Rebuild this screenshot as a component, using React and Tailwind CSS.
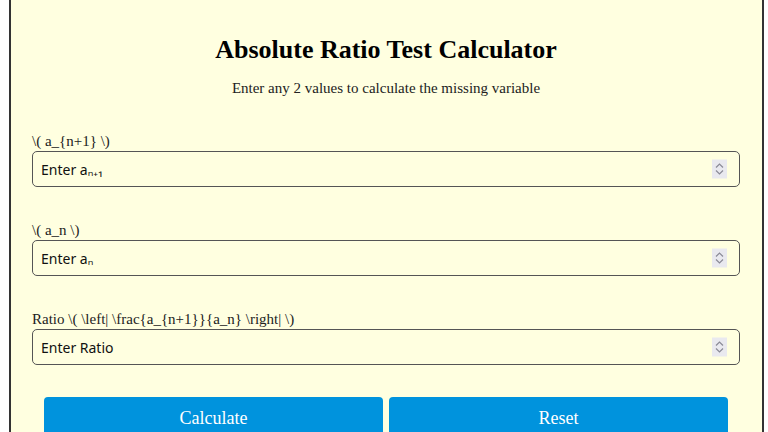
import React from 'react';

// Spinner drawn to mimic the number input's up/down buttons
const Spinner = () => (
  <div className="absolute right-[13px] top-1/2 -translate-y-1/2 w-[15px] h-[19px] bg-[#e9e9ef] flex flex-col items-center justify-center gap-[1px] pointer-events-none">
    <svg width="9" height="6" viewBox="0 0 9 6" fill="none" stroke="#8a8a96" strokeWidth="1.2">
      <path d="M1 5 L4.5 1.5 L8 5" />
    </svg>
    <svg width="9" height="6" viewBox="0 0 9 6" fill="none" stroke="#8a8a96" strokeWidth="1.2">
      <path d="M1 1 L4.5 4.5 L8 1" />
    </svg>
  </div>
);

const Field = ({ label, placeholder }) => (
  <div className="flex flex-col">
    <label className="text-[15px] leading-[17px] text-[#222] mb-[1px]">{label}</label>
    <div className="relative">
      <input
        type="text"
        placeholder={placeholder}
        className="w-full h-[36px] px-[8px] rounded-[5px] border border-[#555] bg-transparent placeholder:text-[#111] outline-none"
        style={{ fontFamily: '"Noto Sans", "DejaVu Sans", sans-serif', fontSize: '14px' }}
      />
      <Spinner />
    </div>
  </div>
);

const App = () => {
  return (
    <div className="bg-white min-h-[432px] pl-[9px] pr-[4px]" style={{ fontFamily: '"Liberation Serif", "Times New Roman", serif' }}>
      <div className="bg-[#ffffe0] border-x-2 border-b-2 border-[#333] pl-[21px] pr-[22px] pt-[35px] pb-8 min-h-[432px]">
        <h1 className="text-center text-[26px] leading-[30px] font-bold text-black">Absolute Ratio Test Calculator</h1>
        <p className="text-center text-[15px] leading-[18px] text-[#222] mt-[14px]">
          Enter any 2 values to calculate the missing variable
        </p>

        <div className="mt-[36px] flex flex-col gap-[35px]">
          <Field label="\( a_{n+1} \)" placeholder="Enter aₙ₊₁" />
          <Field label="\( a_n \)" placeholder="Enter aₙ" />
          <Field label="Ratio \( \left| \frac{a_{n+1}}{a_n} \right| \)" placeholder="Enter Ratio" />
        </div>

        <div className="mt-[32px] pl-3 pr-3 flex gap-[6px]">
          <button className="flex-1 h-[42px] rounded-[4px] bg-[#0093dd] text-white text-[18px]">Calculate</button>
          <button className="flex-1 h-[42px] rounded-[4px] bg-[#0093dd] text-white text-[18px]">Reset</button>
        </div>
      </div>
    </div>
  );
};

export default App;
